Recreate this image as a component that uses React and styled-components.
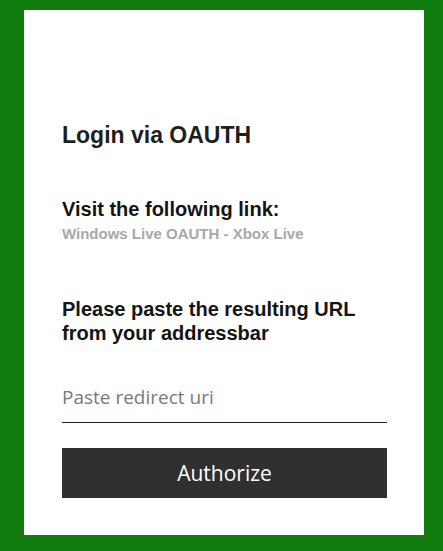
import React from 'react';
import styled, { createGlobalStyle } from 'styled-components';

const Global = createGlobalStyle`
  html, body {
    margin: 0;
    padding: 0;
    background: #107c10;
  }
  body {
    font-family: "Liberation Sans", Arial, sans-serif;
  }
`;

const Page = styled.div`
  padding: 10px 19px 16px 24px;
`;

const Card = styled.div`
  background: #fff;
  height: 525px;
  box-sizing: border-box;
  padding: 112px 37px 0 38px;
`;

const Title = styled.h1`
  margin: 0;
  font-size: 23px;
  line-height: normal;
  font-weight: 700;
  color: #1e1e1e;
`;

const Section = styled.div`
  margin-top: ${p => p.gap}px;
`;

const Label = styled.h2`
  margin: 0;
  font-size: 20px;
  line-height: ${p => p.lh || 'normal'};
  font-weight: 700;
  color: #141414;
`;

const Link = styled.a`
  display: block;
  margin-top: 4px;
  font-size: 15px;
  line-height: normal;
  font-weight: 700;
  color: #a8a8a8;
  text-decoration: none;
`;

const Input = styled.input`
  display: block;
  width: 100%;
  box-sizing: border-box;
  height: 44px;
  margin-top: 34px;
  padding: 0 0 8px;
  border: 0;
  border-bottom: 1px solid #222;
  outline: 0;
  font-family: "Open Sans", "Noto Sans", sans-serif;
  font-size: 19px;
  color: #222;
  background: transparent;
  &::placeholder {
    color: #7a7a7a;
  }
`;

const Button = styled.button`
  display: block;
  width: 100%;
  height: 50px;
  margin-top: 25px;
  border: 0;
  background: #303030;
  color: #fff;
  font-family: "Open Sans", "Noto Sans", sans-serif;
  font-size: 21px;
  cursor: pointer;
`;

export default function App() {
  return (
    <Page>
      <Global />
      <Card>
        <Title>Login via OAUTH</Title>
        <Section gap={49}>
          <Label>Visit the following link:</Label>
          <Link href="#">Windows Live OAUTH - Xbox Live</Link>
        </Section>
        <Section gap={55}>
          <Label lh="24px">Please paste the resulting URL from your addressbar</Label>
        </Section>
        <Input placeholder="Paste redirect uri" />
        <Button>Authorize</Button>
      </Card>
    </Page>
  );
}
